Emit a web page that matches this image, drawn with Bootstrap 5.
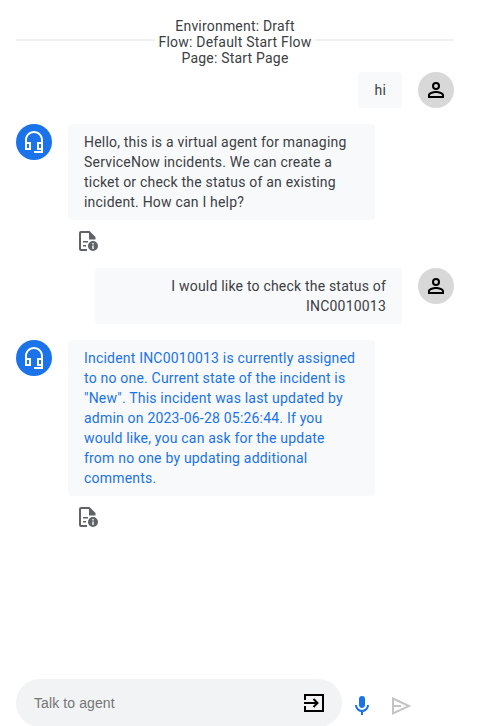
<!DOCTYPE html>
<html lang="en">
<head>
<meta charset="utf-8">
<meta name="viewport" content="width=device-width, initial-scale=1">
<title>Virtual agent</title>
<link href="https://cdn.jsdelivr.net/npm/bootstrap@5.3.0/dist/css/bootstrap.min.css" rel="stylesheet">
<style>
body{font-family:Roboto,"Liberation Sans",sans-serif;font-size:14px;line-height:20px;letter-spacing:.2px;color:#3c4043;background:#fff}
.simulator{width:438px;margin-left:16px;padding-top:18px}
.session{line-height:16px;letter-spacing:.2px;margin-bottom:6.4px}
.rule{height:2px;background:#f0f0f0;margin-top:-4px}
.avatar{width:36px;height:36px}
.avatar-agent{background:#1a73e8;color:#fff}
.avatar-user{background:#d8d8d8;color:#000}
.bubble{max-width:307px;padding:8px 16px;background:#f8f9fb;border-radius:4px}
.bubble-agent{width:307px;padding-right:19px}
.reply{color:#1a73e8}
.details{height:40px;margin-left:59px;padding-top:1px;color:#5f6368}
.composer{height:47px}
.entry{width:326px;height:48px;background:#f1f3f4;border-radius:24px;padding:0 16px 0 18px}
.entry input,.entry input:focus{font:14px "Liberation Sans",Arial,sans-serif;letter-spacing:.1px;color:#3c4043;outline:0}
.entry input::placeholder{color:#757575;opacity:1}
svg{display:block;fill:currentColor;flex-shrink:0}
.mic{color:#1a73e8;margin:15px 0 0 8px}
.send{color:#c4c4c4;margin:15px 0 0 15px}
</style>
</head>
<body class="overflow-hidden">
<svg class="d-none">
<symbol id="headset" viewBox="0 0 24 24"><path d="M12 1c-4.97 0-9 4.03-9 9v10h6v-8H5v-2c0-3.87 3.13-7 7-7s7 3.13 7 7v2h-4v8h4v1h-7v2h9V10c0-4.97-4.03-9-9-9zM7 14v4H5v-4h2zm12 4h-2v-4h2v4z"/></symbol>
<symbol id="person" viewBox="0 0 24 24"><path d="M12 6a2 2 0 1 1 0 4 2 2 0 0 1 0-4m0 9c2.7 0 5.8 1.29 6 2v1H6v-.99c.2-.72 3.3-2.01 6-2.01m0-11a4 4 0 1 0 0 8 4 4 0 0 0 0-8zm0 9c-2.67 0-8 1.34-8 4v3h16v-3c0-2.66-5.33-4-8-4z"/></symbol>
<symbol id="report" viewBox="0 0 20 20"><path d="M2 0h8.500l6 6v2.500h-6.500V2H2v16h6v2H2a2 2 0 0 1-2-2V2a2 2 0 0 1 2-2z"/><path d="M4 10h5v1.500H4zM4 14h3v1.500H4z"/><path fill-rule="evenodd" d="M14 10a5 5 0 1 1 0 10 5 5 0 0 1 0-10zm-.7 2v1.400h1.400V12zm0 2.400V18h1.400v-3.600z"/></symbol>
</svg>
<div class="simulator vh-100 d-flex flex-column">
  <header class="session d-flex align-items-center text-center">
    <div class="rule flex-fill"></div>
    <div class="px-1 mx-0">Environment: Draft<br>Flow: Default Start Flow<br>Page: Start Page</div>
    <div class="rule flex-fill"></div>
  </header>
  <main class="flex-fill">
    <div class="d-flex justify-content-end align-items-start gap-3 mb-3">
      <div class="bubble text-end">hi</div>
      <div class="avatar avatar-user rounded-circle d-flex align-items-center justify-content-center"><svg width="24" height="24"><use href="#person"/></svg></div>
    </div>
    <div class="d-flex align-items-start gap-3">
      <div class="avatar avatar-agent rounded-circle d-flex align-items-center justify-content-center"><svg width="24" height="24"><use href="#headset"/></svg></div>
      <div class="bubble bubble-agent">Hello, this is a virtual agent for managing ServiceNow incidents. We can create a ticket or check the status of an existing incident. How can I help?</div>
    </div>
    <div class="details d-flex align-items-center mb-2"><svg class="ms-1" width="20" height="20"><use href="#report"/></svg></div>
    <div class="d-flex justify-content-end align-items-start gap-3 mb-3">
      <div class="bubble text-end">I would like to check the status of INC0010013</div>
      <div class="avatar avatar-user rounded-circle d-flex align-items-center justify-content-center"><svg width="24" height="24"><use href="#person"/></svg></div>
    </div>
    <div class="d-flex align-items-start gap-3">
      <div class="avatar avatar-agent rounded-circle d-flex align-items-center justify-content-center"><svg width="24" height="24"><use href="#headset"/></svg></div>
      <div class="bubble bubble-agent reply">Incident INC0010013 is currently assigned to no one. Current state of the incident is "New". This incident was last updated by admin on 2023-06-28 05:26:44. If you would like, you can ask for the update from no one by updating additional comments.</div>
    </div>
    <div class="details d-flex align-items-center"><svg class="ms-1" width="20" height="20"><use href="#report"/></svg></div>
  </main>
  <footer class="composer d-flex align-items-start">
    <div class="entry d-flex align-items-center">
      <input class="flex-fill border-0 bg-transparent p-0" type="text" placeholder="Talk to agent" aria-label="Talk to agent">
      <svg width="24" height="24" viewBox="0 0 24 24" class="text-black"><path fill="none" stroke="currentColor" stroke-width="2" d="M3 9V4h18v16H3v-5M2 12h13M11.500 8l4 4-4 4"/></svg>
    </div>
    <svg class="mic" width="24" height="24" viewBox="0 0 24 24"><path d="M12 14c1.660 0 3-1.340 3-3V5a3 3 0 0 0-6 0v6c0 1.660 1.340 3 3 3zm5-3a5 5 0 0 1-10 0H5c0 3.530 2.610 6.430 6 6.920V21h2v-3.080c3.390-.49 6-3.390 6-6.920h-2z"/></svg>
    <svg class="send" width="24" height="24" viewBox="0 0 24 24"><path fill="none" stroke="currentColor" stroke-width="2" d="M4 4.500 20 12 4 19.500zM4 12h8"/></svg>
  </footer>
</div>
<script src="https://cdn.jsdelivr.net/npm/bootstrap@5.3.0/dist/js/bootstrap.bundle.min.js"></script>
</body>
</html>
